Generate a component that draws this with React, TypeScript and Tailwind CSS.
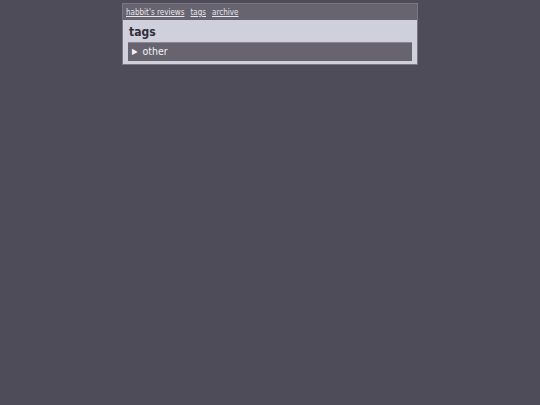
export default function App() {
  return (
    <div className="min-h-[405px] bg-[#4f4c59] pt-[3px] font-stretch-condensed" style={{ fontFamily: '"DejaVu Sans", "Open Sans", sans-serif' }}>
      <div className="mx-auto w-[296px] border border-[#7a7784] bg-[#d0cfdc]">
        {/* nav */}
        <div className="flex h-[16px] items-center gap-[6px] bg-[#67646f] px-[3px] pt-[2px] text-[8px] text-[#e6e5ee]">
          <a className="underline" href="#">habbit's reviews</a>
          <a className="underline" href="#">tags</a>
          <a className="underline" href="#">archive</a>
        </div>
        <div className="px-[5px] pt-[4px] pb-[3px]">
          <h1 className="pl-[1px] text-[12px] font-bold leading-[17px] text-[#2f2e3a]">tags</h1>
          <div className="mt-[1px] flex h-[19px] items-center gap-[5px] border-t border-[#8a8794] bg-[#67646f] px-[4px] text-[10.5px] text-[#f2f2f6]">
            <span className="text-[8px]">▶</span>
            <span>other</span>
          </div>
        </div>
      </div>
    </div>
  );
}
